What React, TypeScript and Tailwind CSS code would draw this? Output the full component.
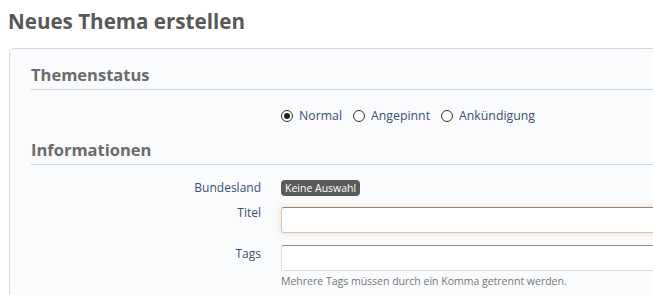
import type { ReactNode } from 'react'

const font = { fontFamily: '"Open Sans", "Noto Sans", "DejaVu Sans", sans-serif' }

function Radio({ label, checked }: { label: string; checked?: boolean }) {
  return (
    <label className="flex items-center gap-[6px] mr-[11px]">
      <span className="w-[12px] h-[12px] rounded-full border border-[#333] bg-white flex items-center justify-center">
        {checked && <span className="w-[6px] h-[6px] rounded-full bg-[#222]" />}
      </span>
      <span className="text-[12.3px] text-[#3d4f78]">{label}</span>
    </label>
  )
}

function Row({ label, children, className = '', labelClass = '' }: { label?: string; children: ReactNode; className?: string; labelClass?: string }) {
  return (
    <div className={`flex items-start ${className}`}>
      <div className={`w-[230px] shrink-0 text-right text-[12px] leading-[16px] text-[#3d4f78] ${labelClass}`}>{label}</div>
      <div className="pl-[20px] flex-1 flex flex-col items-start">{children}</div>
    </div>
  )
}

function Heading({ children }: { children: ReactNode }) {
  return (
    <h2 className="text-[16.5px] font-bold text-[#6b6b6b] border-b border-[#cfd3d8] pb-[3px] leading-[22px]">
      {children}
    </h2>
  )
}

export default function App() {
  return (
    <div className="w-[653px] h-[295px] overflow-hidden bg-white" style={font}>
      <h1 className="text-[20.6px] font-bold text-[#585858] pl-[8px] pt-[8px] leading-[26px]">Neues Thema erstellen</h1>

      <div className="ml-[9px] mt-[14px] w-[700px] h-[300px] rounded-[5px] border border-[#d8dadd] bg-[#f9fbfd] pl-[21px] pt-[15px]">
        <Heading>Themenstatus</Heading>

        <Row className="mt-[16px] h-[20px]">
          <div className="flex items-center h-[20px]">
            <Radio label="Normal" checked />
            <Radio label="Angepinnt" />
            <Radio label="Ankündigung" />
          </div>
        </Row>

        <div className="mt-[13px]">
          <Heading>Informationen</Heading>
        </div>

        <Row label="Bundesland" className="mt-[15px]">
          <span className="rounded-[4px] bg-[#5a5a5a] text-white text-[10.5px] px-[4px] leading-[16px]">Keine Auswahl</span>
        </Row>

        <Row label="Titel" className="mt-[11px]" labelClass="-mt-[2px]">
          <div className="w-full h-[26px] rounded-[3px] border border-[#d0c8bf] border-t-[#8a8580] bg-white shadow-[0_0_6px_rgba(240,170,100,0.45)]" />
        </Row>

        <Row label="Tags" className="mt-[12px]" labelClass="mt-[1px]">
          <div className="w-full h-[26px] rounded-[3px] border border-[#dcdcdc] border-t-[#8f8f8f] bg-white" />
          <p className="text-[10.5px] leading-[14px] text-[#777] mt-[3px]">Mehrere Tags müssen durch ein Komma getrennt werden.</p>
        </Row>
      </div>
    </div>
  )
}
